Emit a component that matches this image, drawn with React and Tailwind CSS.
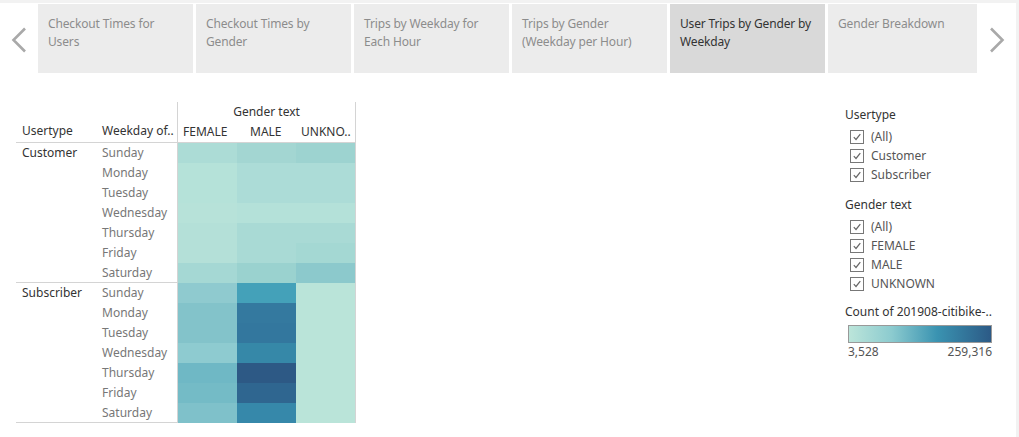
import { Fragment } from 'react';

const tabs = [
    { label: 'Checkout Times for Users' },
    { label: 'Checkout Times by Gender' },
    { label: 'Trips by Weekday for Each Hour' },
    { label: 'Trips by Gender (Weekday per Hour)' },
    { label: 'User Trips by Gender by Weekday', active: true },
    { label: 'Gender Breakdown' },
];

const days = ['Sunday', 'Monday', 'Tuesday', 'Wednesday', 'Thursday', 'Friday', 'Saturday'];

const groups = [
    {
        name: 'Customer',
        cells: [
            ['#acdcd6', '#a3d6d2', '#9dd3d0'],
            ['#b5e2d9', '#acdcd7', '#acdcd7'],
            ['#b5e2d9', '#acdcd7', '#acdcd7'],
            ['#b7e2d9', '#b4e1d9', '#b4e1d9'],
            ['#b4e0d8', '#a9dad5', '#a9dad5'],
            ['#b4e0d8', '#a9dad5', '#a4d8d3'],
            ['#a5d8d4', '#9ad2cf', '#8cc9cc'],
        ],
    },
    {
        name: 'Subscriber',
        cells: [
            ['#8fcacf', '#44a1b9', '#bae4d9'],
            ['#83c3ca', '#34799f', '#bae4d9'],
            ['#83c3ca', '#33779e', '#bae4d9'],
            ['#8ecbd0', '#3688a8', '#bae4d9'],
            ['#6fb8c5', '#2d5985', '#bae4d9'],
            ['#74bbc6', '#2f6690', '#bae4d9'],
            ['#7fc1ca', '#3688aa', '#bae4d9'],
        ],
    },
];

function Chevron({ dir }) {
    return (
        <svg width="16" height="26" viewBox="0 0 16 26" fill="none">
            <path
                d={dir === 'left' ? 'M14 1.5 L2.5 13 L14 24.5' : 'M2 1.5 L13.5 13 L2 24.5'}
                stroke="#a9a9a9"
                strokeWidth="2.6"
            />
        </svg>
    );
}

function Check({ label }) {
    return (
        <div className="flex h-[19px] items-center gap-[7px] pl-[5px]">
            <span className="flex h-[14px] w-[14px] items-center justify-center border border-[#777] bg-white">
                <svg width="10" height="10" viewBox="0 0 10 10" fill="none">
                    <path d="M1.8 5.2 L4 7.5 L8.3 2.2" stroke="#666" strokeWidth="1.2" />
                </svg>
            </span>
            <span className="text-[12px] text-[#555]">{label}</span>
        </div>
    );
}

export default function App() {
    return (
        <main
            className="flex h-[437px] w-[1019px] flex-col overflow-hidden border-t-[3px] border-r-[3px] border-[#f2f2f2] bg-white"
            style={{ fontFamily: '"Noto Sans", "Open Sans", sans-serif' }}
        >
            <div className="mt-px flex h-[69px]">
                <div className="flex w-[38px] items-start justify-center pt-[23px]">
                    <Chevron dir="left" />
                </div>
                <div className="flex gap-[3px]">
                    {tabs.map((tab, i) => (
                        <div
                            key={tab.label}
                            className={`${i === 5 ? 'w-[149px]' : 'w-[155px]'} px-[10px] pt-[11px] text-[12px] leading-[18px] tracking-[-0.15px] ${
                                tab.active ? 'bg-[#d9d9d9] text-[#333]' : 'bg-[#ececec] text-[#8c8c8c]'
                            }`}
                        >
                            {tab.label}
                        </div>
                    ))}
                </div>
                <div className="flex flex-1 items-start justify-center pt-[23px]">
                    <Chevron dir="right" />
                </div>
            </div>

            <div className="flex flex-1">
                <div className="ml-[16px] mt-[29px] text-[12px]">
                    <div className="flex h-[40px]">
                        <div className="flex w-[161px] items-end pb-[2px] text-[#333]">
                            <span className="w-[80px] pl-[6px]">Usertype</span>
                            <span className="w-[81px] pl-[6px]">Weekday of..</span>
                        </div>
                        <div className="w-[179px] border-x border-[#d4d4d4]">
                            <div className="flex h-[20px] items-center justify-center text-[#333]">Gender text</div>
                            <div className="flex h-[20px] items-center text-[#333]">
                                <span className="w-[59px] pl-[5px]">FEMALE</span>
                                <span className="w-[59px] pl-[13px]">MALE</span>
                                <span className="w-[59px] pl-[5px]">UNKNO..</span>
                            </div>
                        </div>
                    </div>
                    {groups.map((g, gi) => (
                        <div key={g.name} className={`flex border-t border-[#d4d4d4] ${gi === 1 ? '-mt-px' : ''}`}>
                            <div className="w-[80px] pl-[6px] pt-[1px] leading-[18px] text-[#333]">{g.name}</div>
                            <div className="w-[81px]">
                                {days.map((d) => (
                                    <div key={d} className="flex h-[20px] items-center pl-[6px] text-[#777]">
                                        {d}
                                    </div>
                                ))}
                            </div>
                            <div className="grid w-[179px] grid-cols-[59px_59px_59px] border-x border-[#d4d4d4]">
                                {g.cells.map((row, r) => (
                                    <Fragment key={r}>
                                        {row.map((c, k) => (
                                            <div key={k} className="h-[20px]" style={{ backgroundColor: c }} />
                                        ))}
                                    </Fragment>
                                ))}
                            </div>
                        </div>
                    ))}
                    <div className="-mt-px w-[340px] border-t border-[#d4d4d4]" />
                </div>

                <div className="ml-auto mt-[33px] w-[171px]">
                    <div className="mb-[3px] text-[12px] text-[#333]">Usertype</div>
                    <Check label="(All)" />
                    <Check label="Customer" />
                    <Check label="Subscriber" />
                    <div className="mb-[3px] mt-[12px] text-[12px] text-[#333]">Gender text</div>
                    <Check label="(All)" />
                    <Check label="FEMALE" />
                    <Check label="MALE" />
                    <Check label="UNKNOWN" />
                    <div className="mt-[10px] text-[12px] text-[#333]">Count of 201908-citibike-..</div>
                    <div className="ml-[3px] mt-[4px] h-[18px] w-[144px] border border-[#999] bg-[linear-gradient(to_right,#bce5da,#8ccbcf_30%,#3a93b1_62%,#2c5a86)]" />
                    <div className="ml-[3px] flex w-[144px] justify-between text-[12px] leading-[18px] text-[#555]">
                        <span>3,528</span>
                        <span>259,316</span>
                    </div>
                </div>
            </div>
        </main>
    );
}
